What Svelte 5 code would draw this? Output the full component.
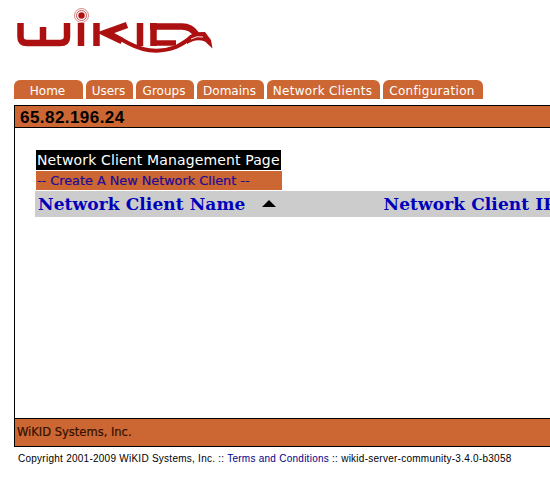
<script>
  const tabs = [
    { label: 'Home', width: 69 },
    { label: 'Users', width: 47 },
    { label: 'Groups', width: 58 },
    { label: 'Domains', width: 67 },
    { label: 'Network Clients', width: 113, wide: true },
    { label: 'Configuration', width: 100, wide: true }
  ];
</script>

<div class="page">
  <svg class="logo" width="230" height="70" viewBox="0 0 230 70" aria-label="WiKID logo">
    <g fill="none" stroke="#b01212">
      <circle cx="81.500" cy="15.500" r="7" stroke-width="1" opacity="0.5" />
      <circle cx="81.500" cy="15.500" r="5" stroke-width="1" opacity="0.7" />
    </g>
    <circle cx="81.500" cy="15.500" r="3.200" fill="#b01212" />
    <g fill="none" stroke="#ac1010" stroke-width="6.500">
      <path d="M20.500 23V37Q20.500 43 27 43H43V27M43 43H60Q67 43 67 37V23" />
      <path d="M81 23V46" />
      <path d="M96.500 23V46" />
      <path d="M127 25 105 33 122 41" />
      <path d="M140 23V46" />
      <path d="M153.500 23V46" />
      <path d="M150 26.500H182Q191 26.500 196 34" />
      <path d="M153 43H176" stroke-width="5.500" />
      <path d="M110 33 128 43Q152 56 176 47Q186 42 191 37Q196 33.500 202 34.500" stroke-width="4" />
    </g>
    <path d="M187 40Q194 31 205 32L211 40 212.500 48.500 205 41.500Q196 38 187 44Z" fill="#ac1010" />
    <path d="M191 39Q197 35.500 203 37" fill="none" stroke="#fff" stroke-width="0.900" />
  </svg>

  <nav class="tabs">
    {#each tabs as tab}
      <a class="tab" class:wide={tab.wide} style="width: {tab.width}px">{tab.label}</a>
    {/each}
  </nav>

  <div class="frame">
    <div class="host">65.82.196.24</div>
    <main class="content">
      <h1>Network Client Management Page</h1>
      <div class="create"><a>-- Create A New Network Client --</a></div>
      <div class="columns">
        <span class="col-name">Network Client Name</span>
        <svg class="sort" width="14" height="7" viewBox="0 0 14 7"><path d="M7 0 14 7H0Z" /></svg>
        <span class="col-ip">Network Client IP</span>
      </div>
    </main>
    <div class="company">WiKID Systems, Inc.</div>
  </div>

  <p class="copyright">Copyright 2001-2009 WiKID Systems, Inc. :: <a>Terms and Conditions</a> :: wikid-server-community-3.4.0-b3058</p>
</div>

<style>
  :global(body) {
    background: #fff;
    overflow: hidden;
  }

  .page {
    width: 550px;
    height: 481px;
    overflow: hidden;
  }

  .logo {
    display: block;
    height: 70px;
  }

  .tabs {
    display: flex;
    gap: 3px;
    height: 19px;
    margin: 10px 0 6px 14px;
  }

  .tab {
    box-sizing: border-box;
    height: 19px;
    padding-right: 2px;
    background: #cc6633;
    border-radius: 6px 6px 0 0;
    color: #fff;
    font: 12px/23px "DejaVu Sans", sans-serif;
    text-align: center;
  }

  .tab.wide {
    letter-spacing: 0.32px;
  }

  .frame {
    width: 600px;
    height: 342px;
    margin-left: 14px;
    border-left: 1px solid #000;
    display: flex;
    flex-direction: column;
  }

  .host {
    box-sizing: border-box;
    height: 23px;
    padding-left: 5px;
    background: #cc6633;
    border-top: 1px solid #000;
    border-bottom: 1px solid #000;
    color: #000;
    font: bold 17px/23px "Liberation Sans", sans-serif;
    letter-spacing: 0.45px;
  }

  .content {
    flex: 1;
    padding-top: 22px;
    padding-left: 20px;
  }

  h1 {
    width: 245px;
    height: 20px;
    margin: 0 0 1px 1px;
    padding-left: 1px;
    box-sizing: border-box;
    background: #000;
    color: #fff;
    font: 14px/20px "DejaVu Sans", sans-serif;
    letter-spacing: 0.14px;
    white-space: nowrap;
  }

  .create {
    width: 246px;
    height: 19px;
    margin-left: 1px;
    padding-left: 1px;
    box-sizing: border-box;
    background: #cc6633;
    color: #1a0a99;
    font: 12.800px/19px "DejaVu Sans", sans-serif;
    -webkit-text-stroke: 0.2px #1a0a99;
    white-space: nowrap;
  }

  .columns {
    display: flex;
    align-items: center;
    height: 26px;
    margin-top: 1px;
    padding-left: 3px;
    background: #cccccc;
    color: #0000bb;
    font: bold 17px/26px "DejaVu Serif", serif;
    letter-spacing: 0.1px;
    white-space: nowrap;
  }

  .sort {
    margin: -1px 0 0 16px;
    fill: #000;
  }

  .col-ip {
    margin-left: 108px;
  }

  .company {
    box-sizing: border-box;
    height: 29px;
    padding-left: 2px;
    background: #cc6633;
    border-top: 1px solid #000;
    border-bottom: 1px solid #000;
    color: #331100;
    font: 11.500px/27px "DejaVu Sans", sans-serif;
    -webkit-text-stroke: 0.2px #331100;
  }

  .copyright {
    margin: 6px 0 0 18px;
    color: #000;
    font: 10px/12px "Liberation Sans", sans-serif;
    letter-spacing: 0.255px;
    white-space: nowrap;
  }

  .copyright a {
    color: #000088;
  }
</style>
